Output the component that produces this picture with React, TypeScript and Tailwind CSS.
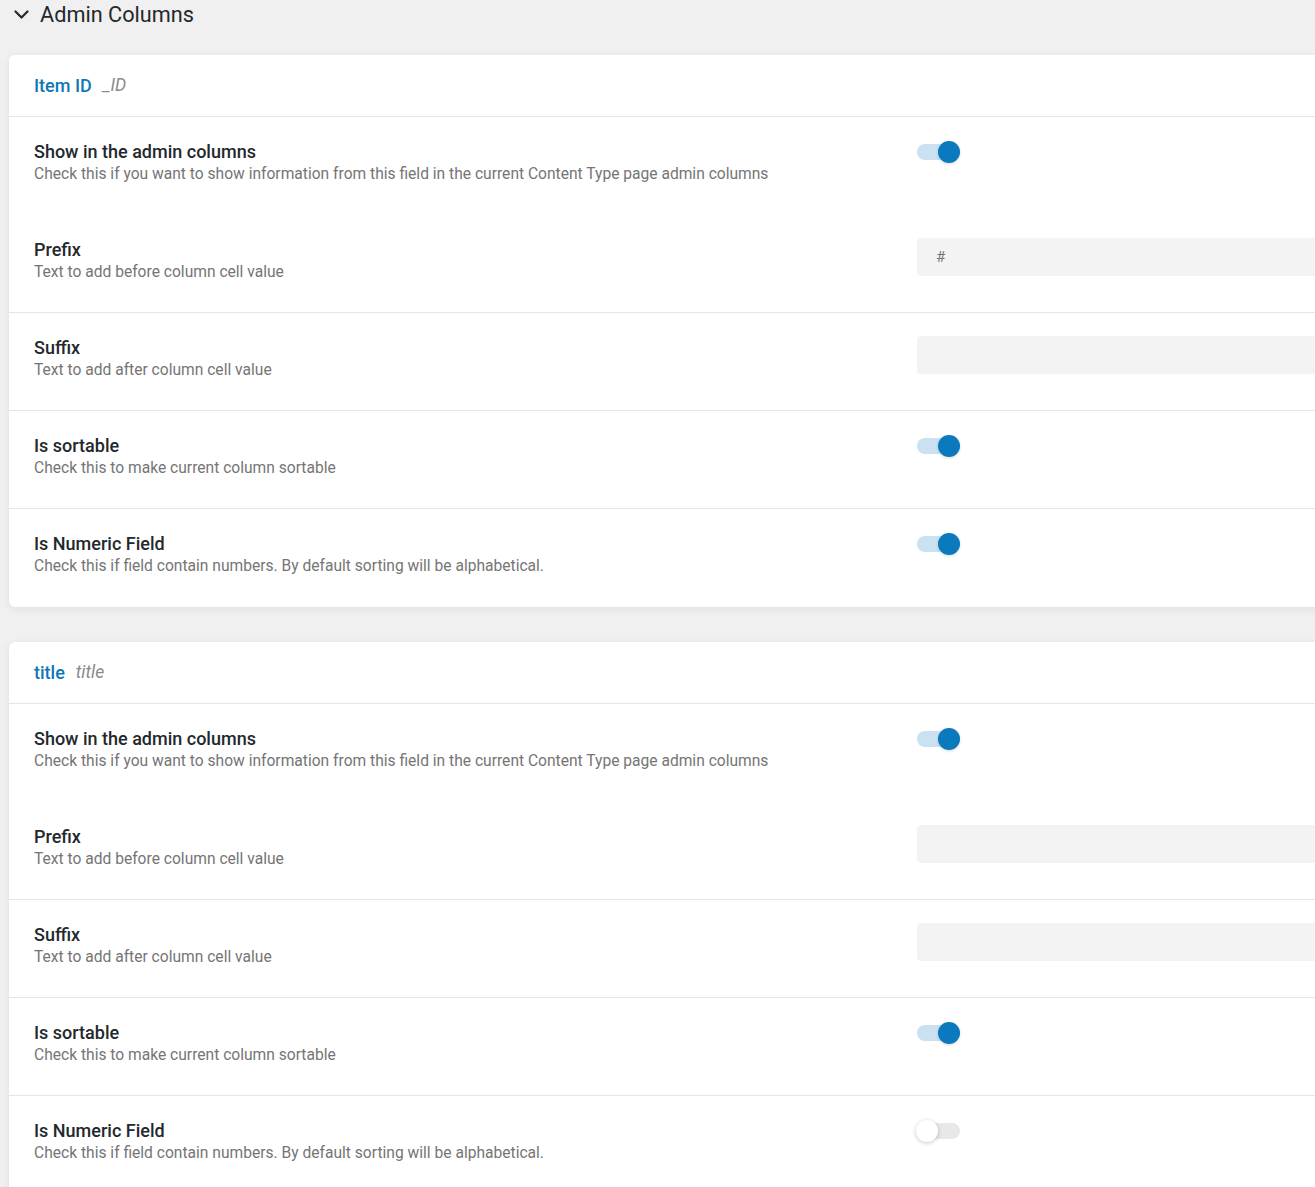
import React from "react";

type Row =
  | { kind: "toggle"; title: string; desc: string; on: boolean; divider: boolean }
  | { kind: "input"; title: string; desc: string; value: string; divider: boolean };

type Field = { label: string; slug: string; rows: Row[] };

const fields: Field[] = [
  {
    label: "Item ID",
    slug: "_ID",
    rows: [
      {
        kind: "toggle",
        title: "Show in the admin columns",
        desc: "Check this if you want to show information from this field in the current Content Type page admin columns",
        on: true,
        divider: false,
      },
      { kind: "input", title: "Prefix", desc: "Text to add before column cell value", value: "#", divider: true },
      { kind: "input", title: "Suffix", desc: "Text to add after column cell value", value: "", divider: true },
      { kind: "toggle", title: "Is sortable", desc: "Check this to make current column sortable", on: true, divider: true },
      {
        kind: "toggle",
        title: "Is Numeric Field",
        desc: "Check this if field contain numbers. By default sorting will be alphabetical.",
        on: true,
        divider: false,
      },
    ],
  },
  {
    label: "title",
    slug: "title",
    rows: [
      {
        kind: "toggle",
        title: "Show in the admin columns",
        desc: "Check this if you want to show information from this field in the current Content Type page admin columns",
        on: true,
        divider: false,
      },
      { kind: "input", title: "Prefix", desc: "Text to add before column cell value", value: "", divider: true },
      { kind: "input", title: "Suffix", desc: "Text to add after column cell value", value: "", divider: true },
      { kind: "toggle", title: "Is sortable", desc: "Check this to make current column sortable", on: true, divider: true },
      {
        kind: "toggle",
        title: "Is Numeric Field",
        desc: "Check this if field contain numbers. By default sorting will be alphabetical.",
        on: false,
        divider: false,
      },
    ],
  },
];

function Switch({ on }: { on: boolean }) {
  return (
    <div className="relative h-[22px] w-[43px]">
      <div
        className={
          "absolute left-0 top-[3px] h-[16px] w-[43px] rounded-full " +
          (on ? "bg-[#c9e1f0]" : "bg-[#e8e8e8]")
        }
      />
      <div
        className={
          "absolute top-0 h-[22px] w-[22px] rounded-full " +
          (on
            ? "left-[21px] bg-[#0a79bd] shadow-[0_1px_3px_rgba(0,0,0,0.15)]"
            : "left-[-1px] bg-white shadow-[0_1px_4px_rgba(0,0,0,0.22)]")
        }
      />
    </div>
  );
}

function FieldRow({ row }: { row: Row }) {
  return (
    <div
      className={
        "flex h-[98px] items-start pl-[25px] pt-[24px] " +
        (row.divider ? "border-b border-[#e5e5e5]" : "")
      }
    >
      <div className="w-[883px] shrink-0">
        <div className="text-[18px] font-medium leading-[22px] text-[#23282d]">{row.title}</div>
        <div className="text-[15.6px] leading-[22px] text-[#757575]">{row.desc}</div>
      </div>
      {row.kind === "toggle" ? (
        <Switch on={row.on} />
      ) : (
        <div className="-mt-[1px] flex h-[38px] w-[440px] items-center rounded-[4px] bg-[#f3f3f3] px-[19px] text-[15px] text-[#757575]">
          {row.value}
        </div>
      )}
    </div>
  );
}

function FieldCard({ field }: { field: Field }) {
  return (
    <div className="w-[1340px] rounded-[6px] bg-white shadow-[0_2px_8px_rgba(0,0,0,0.07)]">
      <div className="flex h-[62px] items-center gap-[11px] border-b border-[#e5e5e5] pl-[25px]">
        <span className="text-[18px] font-medium text-[#0e77b5]">{field.label}</span>
        <span className="text-[17.5px] italic text-[#8a8a8a]">{field.slug}</span>
      </div>
      {field.rows.map((r, i) => (
        <FieldRow key={i} row={r} />
      ))}
    </div>
  );
}

export default function App() {
  return (
    <div
      className="h-[1187px] w-[1315px] overflow-hidden bg-[#f0f0f0]"
      style={{ fontFamily: "Roboto, 'Noto Sans', sans-serif" }}
    >
      <div className="flex h-[30px] items-center gap-[11px] pl-[14px]">
        <svg width="15" height="10" viewBox="0 0 15 10" fill="none">
          <path d="M1.5 1.5 L7.5 7.5 L13.5 1.5" stroke="#23282d" strokeWidth="2.2" strokeLinecap="round" strokeLinejoin="round" />
        </svg>
        <span className="text-[21.7px] leading-[28px] text-[#23282d]">Admin Columns</span>
      </div>
      <div className="flex flex-col gap-[35px] pl-[9px] pt-[25px]">
        {fields.map((f, i) => (
          <FieldCard key={i} field={f} />
        ))}
      </div>
    </div>
  );
}
